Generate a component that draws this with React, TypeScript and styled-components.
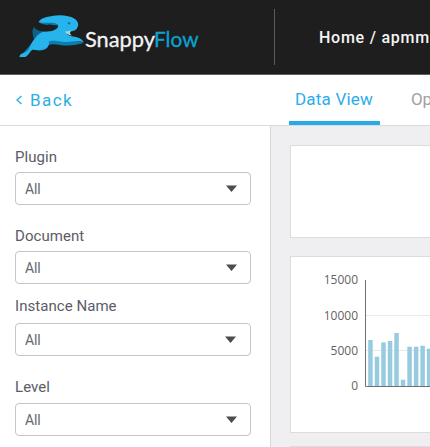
import React from "react";
import styled, { createGlobalStyle } from "styled-components";

const GlobalStyle = createGlobalStyle`
  * { box-sizing: border-box; }
  body { margin: 0; overflow: hidden; font-family: Roboto, sans-serif; background: #fff; }
`;

const Page = styled.div`
  width: 430px;
  height: 447px;
  display: flex;
  flex-direction: column;
  overflow: hidden;
`;

const Header = styled.header`
  flex: none;
  height: 75px;
  display: flex;
  align-items: flex-start;
  background: #1e1e1e;
  border-bottom: 1px solid #5f5f5f;
`;

const Logo = styled.svg`
  display: block;
  flex: none;
  width: 274px;
  height: 74px;
`;

const Divider = styled.div`
  flex: none;
  width: 1px;
  height: 56px;
  margin-top: 9px;
  background: #5c5c5c;
`;

const Breadcrumb = styled.nav`
  margin: 28px 0 0 44px;
  font-size: 16px;
  font-weight: 500;
  line-height: 20px;
  letter-spacing: 0.75px;
  white-space: nowrap;
  color: #f4f4f4;
`;

const TabBar = styled.div`
  flex: none;
  height: 51px;
  display: flex;
  border-bottom: 1px solid #dadada;
  white-space: nowrap;
`;

const BackLink = styled.a`
  width: 289px;
  flex: none;
  display: flex;
  align-items: center;
  gap: 8px;
  padding-left: 16px;
  font-size: 17px;
  line-height: 50px;
  letter-spacing: 1.4px;
  color: #2cb0e2;
`;

const Tab = styled.div<{ $active?: boolean }>`
  flex: none;
  height: 50px;
  padding: 0 6px;
  width: ${(p) => (p.$active ? "91px" : "auto")};
  margin-right: ${(p) => (p.$active ? "25px" : "0")};
  font-size: 17px;
  line-height: 49px;
  letter-spacing: ${(p) => (p.$active ? "0.2px" : "-0.2px")};
  color: ${(p) => (p.$active ? "#2badec" : "#a0a0a0")};
  box-shadow: ${(p) => (p.$active ? "inset 0 -4px #27aae8" : "none")};
`;

const Body = styled.div`
  flex: 1;
  min-height: 0;
  display: flex;
`;

const Sidebar = styled.aside`
  flex: none;
  width: 271px;
  padding: 21px 19px 0 15px;
  border-right: 1px solid #dadadc;
`;

const Field = styled.div<{ $height: number; $gap: number }>`
  height: ${(p) => p.$height}px;
  display: flex;
  flex-direction: column;
  gap: ${(p) => p.$gap}px;
`;

const Label = styled.label`
  font-size: 15px;
  line-height: 20px;
  letter-spacing: 0.05px;
  color: #5c5c66;
`;

const Select = styled.div<{ $inset: number }>`
  width: 236px;
  height: 33px;
  padding: 0 ${(p) => p.$inset}px 0 9px;
  display: flex;
  align-items: center;
  justify-content: space-between;
  border: 1px solid #c6c6c6;
  border-radius: 4px;
  font-size: 14px;
  letter-spacing: -0.1px;
  color: #66666c;
`;

const Content = styled.main`
  flex: 1;
  min-width: 0;
  padding: 19px 0 0 19px;
  background: #efeff1;
  overflow: hidden;
`;

const Card = styled.section<{ $height: number; $gap: number }>`
  width: 400px;
  height: ${(p) => p.$height}px;
  margin-bottom: ${(p) => p.$gap}px;
  background: #fff;
  border: 1px solid #dcdcdc;
`;

const Chart = styled.svg`
  display: block;
  width: 139px;
  height: 175px;
  font-family: "Open Sans", sans-serif;
  font-size: 12px;
`;

const fields = [
  { label: "Plugin", height: 79, gap: 5, inset: 13 },
  { label: "Document", height: 70, gap: 5, inset: 13 },
  { label: "Instance Name", height: 81, gap: 7, inset: 14 },
  { label: "Level", height: 60, gap: 6, inset: 13 },
];

const bars = [46, 29.3, 43.6, 45, 53, 6.3, 39.3, 39.3, 40.3, 37.3];
const ticks = [
  { label: "15000", y: 23 },
  { label: "10000", y: 58.5 },
  { label: "5000", y: 93.5 },
  { label: "0", y: 129 },
];

const SnappyFlowLogo = () => (
  <Logo viewBox="0 0 274 74" role="img" aria-label="SnappyFlow">
    <path d="M34 39C32 34 32 29 34 27C36 30 40 32 46 31L38 43Z" fill="#0d6185" />
    <path d="M38.500 22C44 18 55 17 62 19L58 25.500C51 24.500 43 26 38.500 22Z" fill="#087aa8" />
    <path d="M31 44C35 38 36 34 43 32L62 36C70 42 77 40 83.500 43C79 44.500 68 46.500 60 45C55 44 51 44 49 45C46 51 39 52 33 49C31 51 29 55 25 57L20 57Z" fill="#087eac" />
    <path d="M52 16C60 14.500 70 15.500 75 19C79 22 79 26 76.500 29C74 32 70 31 67 31.500C65.500 34 69 36 73 36.500C78 37 83 39 83.500 42.500C77 40 71 42.500 64 42C56 41 50 40 49 42C49 47 46 50 40 50C36 50.500 33 49 31.500 50C29 52 28 56 25 57L19.500 57C19.500 54 23 53 26 52C30 50 30 45 32.500 42C36 37 39 33 43 32L52 31C57 29.500 60 26 57 24C52 21.500 45 24 38.500 22C41 18 46 17 52 16Z" fill="#27b3eb" />
    <path d="M65 31.500L72 30.500C69 32 70 34 72 35.500C68 35 66 33.500 65 31.500Z" fill="#a2d8d7" />
    <circle cx="69" cy="23.3" r="1.2" fill="#087ba8" />
    <text x="85" y="47" fontFamily="Lato, sans-serif" fontSize="22" fill="#f4f4f4" stroke="#f4f4f4" strokeWidth=".3" textLength="70" lengthAdjust="spacingAndGlyphs">Snappy</text>
    <text x="154" y="47" fontFamily="Lato, sans-serif" fontSize="22" fill="#0aa2d5" stroke="#0aa2d5" strokeWidth=".3" textLength="44.5" lengthAdjust="spacingAndGlyphs">Flow</text>
  </Logo>
);

export default function App() {
  return (
    <Page>
      <GlobalStyle />
      <Header>
        <SnappyFlowLogo />
        <Divider />
        <Breadcrumb>Home / apmm</Breadcrumb>
      </Header>
      <TabBar>
        <BackLink>
          <svg width="6" height="10" viewBox="0 0 6 10" fill="none" stroke="#2cb0e2" strokeWidth="1.5">
            <path d="M5.500 1L1 5L5.500 9" />
          </svg>
          Back
        </BackLink>
        <Tab $active>Data View</Tab>
        <Tab>Op</Tab>
      </TabBar>
      <Body>
        <Sidebar>
          {fields.map((f) => (
            <Field key={f.label} $height={f.height} $gap={f.gap}>
              <Label>{f.label}</Label>
              <Select $inset={f.inset}>
                All
                <svg width="11" height="7" viewBox="0 0 11 7">
                  <path d="M0 .5H11L5.500 7Z" fill="#4d4d4d" />
                </svg>
              </Select>
            </Field>
          ))}
        </Sidebar>
        <Content>
          <Card $height={93} $gap={18} />
          <Card $height={177} $gap={13}>
            <Chart viewBox="0 0 139 175">
              <path d="M75 58.500H139M75 93.500H139" stroke="#e9e9e9" />
              {bars.map((h, i) => (
                <rect key={i} x={77.2 + i * 6.52} y={129 - h} width="4.5" height={h} fill="#97cbdf" />
              ))}
              <path d="M74.500 23V129.500H139" fill="none" stroke="#707070" />
              {ticks.map((t) => (
                <text key={t.label} x="67" y={t.y + 4} textAnchor="end" fill="#636363">
                  {t.label}
                </text>
              ))}
            </Chart>
          </Card>
          <Card $height={90} $gap={0} />
        </Content>
      </Body>
    </Page>
  );
}
